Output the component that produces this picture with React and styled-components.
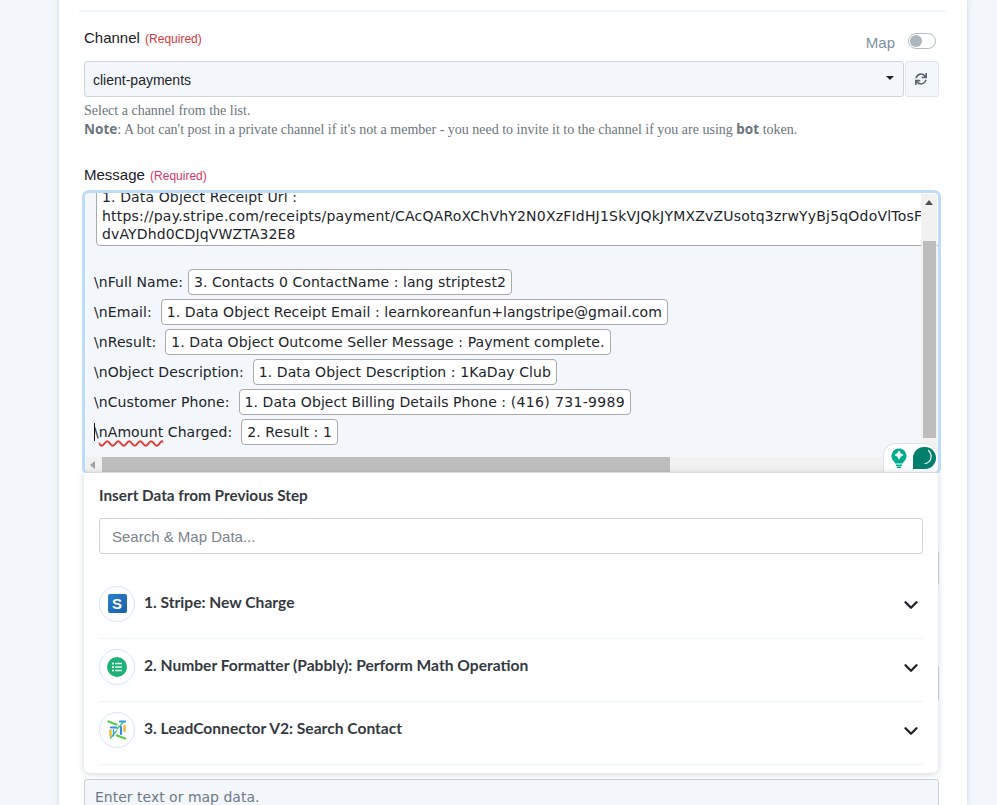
import React from 'react';
import styled, { createGlobalStyle } from 'styled-components';
import { FaSync } from 'react-icons/fa';
import { ChevronDown } from 'lucide-react';

const Global = createGlobalStyle`
  html, body { margin: 0; padding: 0; background: #f3f6fa; }
  body { font-family: "Liberation Sans", Arial, sans-serif; }
`;
const Page = styled.div`
  width: 997px; height: 805px; overflow: hidden; padding-left: 59px; box-sizing: border-box;
`;
const Card = styled.div`
  width: 908px; height: 805px; background: #fff; box-sizing: border-box;
  box-shadow: 0 0 4px rgba(150, 180, 225, .55);
  padding: 10px 28px 0 25px;
`;
const Divider = styled.div`
  height: 2px; background: #eff6fe; margin: 0 -7px 0 -5px;
`;
const LabelRow = styled.div`
  display: flex; align-items: flex-start; justify-content: space-between; height: 49px;
`;
const Label = styled.label`
  font-size: 15px; line-height: 18px; color: #1a2027; display: block;
`;
const ChannelLabel = styled(Label)`
  padding-top: 17px;
`;
const Required = styled.span`
  font-size: 12px; color: ${p => p.$pink ? '#e0335f' : '#d9363e'}; margin-left: 1px;
`;
const MapToggle = styled.div`
  display: flex; align-items: center; gap: 13px; margin: 22px 3px 0 0;
  font-size: 15px; color: #7d8fa3; line-height: 18px;
`;
const Switch = styled.span`
  width: 28px; height: 16px; border: 1px solid #b6bec8; border-radius: 9px; box-sizing: border-box;
  display: flex; align-items: center; padding-left: 1px; margin-top: -4px;
  &::before { content: ""; width: 12px; height: 12px; border-radius: 50%; background: #adb5bd; }
`;
const SelectRow = styled.div`
  display: flex; gap: 1px; height: 36px;
`;
const Select = styled.div`
  flex: 1; background: #f3f6fa; border: 1px solid #ced4da; border-radius: 3px; box-sizing: border-box;
  display: flex; align-items: center; justify-content: space-between; padding: 1px 9px 0 8px;
  font-size: 14px; color: #212529;
`;
const Caret = styled.span`
  width: 0; height: 0; border-left: 4px solid transparent; border-right: 4px solid transparent;
  border-top: 4px solid #212529; margin-bottom: 3px;
`;
const RefreshBtn = styled.div`
  width: 34px; background: #f3f6fa; border: 1px solid #e2e6eb; border-radius: 3px; box-sizing: border-box;
  display: flex; align-items: center; justify-content: center; color: #5a6570; font-size: 12px;
  padding-right: 2px;
`;
const Hint = styled.div`
  font-family: "Liberation Serif", serif; font-size: 14px; line-height: 19px; color: #6c757d;
  margin-top: 4px; height: 49px;
  b { font-family: "Noto Sans", sans-serif; font-weight: 700; font-size: 13.500px; }
`;
const MessageLabel = styled(Label)`
  height: 24px; margin-top: 16px;
`;
const EditorWrap = styled.div`
  position: relative; margin: 0 -2px; height: 285px; box-sizing: border-box;
  border: 3px solid #bedbf8; border-radius: 7px; background: #f3f6fa; overflow: visible;
`;
const EditorView = styled.div`
  height: 279px; overflow: hidden; position: relative; border-radius: 4px;
  font-family: "DejaVu Sans", Verdana, sans-serif; font-size: 14px; color: #212529; letter-spacing: .08px;
`;
const EditorContent = styled.div`
  padding-left: 9px; width: 900px; margin-top: -11px;
`;
const LongChip = styled.div`
  margin-left: 2px; width: 860px; height: 64px; padding: 5px 0 0 5px; box-sizing: border-box; white-space: nowrap;
  background: #fff; border: 1px solid #aaa; border-radius: 4px; line-height: 18.500px; margin-bottom: 21px;
  letter-spacing: .13px;
`;
const UrlLine = styled.span`
  letter-spacing: .2px;
`;
const Row = styled.div`
  display: flex; align-items: center; height: 30px; white-space: pre; position: relative;
`;
const Chip = styled.span`
  display: inline-flex; align-items: center; height: 26px; padding: 0 5px; box-sizing: border-box; white-space: pre;
  background: #fff; border: 1px solid #aaa; border-radius: 4px; margin-left: ${p => p.$ml}px;
`;
const Phone = styled.span`
  letter-spacing: .35px;
`;
const Wavy = styled.span`
  text-decoration: underline wavy #e53935 1.500px; text-underline-offset: 3px;
`;
const TextCaret = styled.span`
  position: absolute; left: 0; top: 6px; width: 1px; height: 18px; background: #111;
`;
const VTrack = styled.div`
  position: absolute; right: 1px; top: 1px; width: 16px; height: 264px; background: #f1f1f1;
`;
const VThumb = styled.div`
  position: absolute; left: 2px; top: 47px; width: 13px; height: 197px; background: #bdbdbd;
`;
const UpArrow = styled.div`
  position: absolute; left: 4px; top: 6px; width: 0; height: 0;
  border-left: 4px solid transparent; border-right: 4px solid transparent; border-bottom: 5px solid #505050;
`;
const HTrack = styled.div`
  position: absolute; left: 0; bottom: 0; height: 15px; width: 836px; background: #f1f1f1;
`;
const HThumb = styled.div`
  position: absolute; left: 17px; top: 0; width: 568px; height: 15px; background: #bdbdbd;
`;
const LeftArrow = styled.div`
  position: absolute; left: 5px; top: 4px; width: 0; height: 0;
  border-top: 4px solid transparent; border-bottom: 4px solid transparent; border-right: 5px solid #a0a0a0;
`;
const Badge = styled.div`
  position: absolute; right: 1px; bottom: 0; width: 54px; height: 29px; box-sizing: border-box;
  background: #fff; border: 1px solid #dde3ea; border-bottom: none; border-right: none; border-radius: 12px 13px 0 0;
  display: flex; align-items: center; gap: 6px; padding-left: 7px;
`;
const Panel = styled.div`
  position: absolute; left: -1px; right: 0; top: 279px; height: 301px; z-index: 3;
  background: #fff; border-top: 1px solid #d5dbe3; border-radius: 0 0 6px 6px; box-sizing: border-box;
  box-shadow: 0 1px 6px rgba(120, 130, 150, .35); padding: 14px 15px 0 15px;
`;
const PanelTitle = styled.div`
  font-family: Lato, sans-serif; font-weight: 700; font-size: 15.300px; line-height: 17px; color: #343a40;
`;
const SearchInput = styled.div`
  height: 36px; margin-top: 14px; border: 1px solid #ced4da; border-radius: 3px; box-sizing: border-box;
  display: flex; align-items: center; padding-left: 12px; font-size: 15px; color: #7b838b;
`;
const List = styled.div`
  margin-top: 22px;
`;
const Item = styled.div`
  height: 63px; box-sizing: border-box; display: flex; align-items: center; gap: 9px;
  border-bottom: 1px solid #eff5fc; padding: 0 0 7px 0;
`;
const IconCircle = styled.span`
  width: 36px; height: 36px; border-radius: 50%; border: 1px solid #d6e4fa; box-sizing: border-box;
  display: flex; align-items: center; justify-content: center; flex: none;
`;
const ItemTitle = styled.span`
  flex: 1; font-family: Lato, sans-serif; font-weight: 700; font-size: 15.600px; color: #343a40; margin-top: -3px;
`;
const Chevron = styled(ChevronDown)`
  color: #212529; margin: 3px 1px 0 0;
`;
const StripeLogo = styled.span`
  width: 19px; height: 19px; border-radius: 2px; background: linear-gradient(135deg, #2a7fd0, #1b5fa8);
  color: #fff; font-weight: 700; font-size: 15px; display: flex; align-items: center; justify-content: center;
`;
const GhostBox = styled.div`
  height: 36px; margin-top: ${p => p.$t}px; box-sizing: border-box;
  border: 1px solid #ced4da; border-radius: 3px; background: #f3f6fa;
`;
const BottomField = styled.div`
  height: 50px; margin-top: 78px; background: #f3f6fa; border: 1px solid #c9d0da; border-radius: 3px;
  box-sizing: border-box; padding: 9px 10px; font-family: "DejaVu Sans", Verdana, sans-serif; font-size: 14px; color: #6d7a88;
`;

const Bulb = () => (
  <svg width="16" height="20" viewBox="0 0 17 21">
    <path d="M8.500 0.500a8 8 0 0 1 5.200 14c-.8.700-1.200 1.200-1.200 1.900h-8c0-.7-.4-1.200-1.200-1.900a8 8 0 0 1 5.200-14z" fill="#00ab8e" />
    <path d="M8.500 3.500c.5 2.300 1.200 3 3.800 3.800-2.600.8-3.300 1.500-3.800 3.800-.5-2.300-1.200-3-3.800-3.800 2.600-.8 3.300-1.500 3.800-3.800z" fill="#fff" stroke="#fff" strokeWidth="1.400" strokeLinejoin="round" />
    <rect x="5" y="17.500" width="7" height="1.500" rx=".7" fill="#00ab8e" />
    <rect x="6" y="19.500" width="5" height="1.500" rx=".7" fill="#00ab8e" />
  </svg>
);
const Assistant = () => (
  <svg width="23" height="22" viewBox="0 0 23 22">
    <path d="M0 22V11A11 11 0 0 1 11 0h1a11 11 0 0 1 0 22z" fill="#037f6c" />
    <path d="M15.500 3.500c4.500 4.500 3 12-3.500 13" fill="none" stroke="#e6f4f1" strokeWidth="1.200" strokeLinecap="round" />
  </svg>
);
const ListLogo = () => (
  <svg width="20" height="20" viewBox="0 0 20 20">
    <circle cx="10" cy="10" r="10" fill="#1fb07a" />
    <g fill="#dff5ec">
      <rect x="5" y="5.500" width="2" height="2" rx=".5" /><rect x="8" y="5.800" width="7" height="1.500" rx=".5" />
      <rect x="5" y="9" width="2" height="2" rx=".5" /><rect x="8" y="9.300" width="7" height="1.500" rx=".5" />
      <rect x="5" y="12.500" width="2" height="2" rx=".5" /><rect x="8" y="12.800" width="7" height="1.500" rx=".5" />
    </g>
  </svg>
);
const LeadLogo = () => (
  <svg width="20" height="20" viewBox="0 0 20 20" fill="none" strokeLinecap="round">
    <path d="M1.500 1.500l8 3" stroke="#5ecb4a" strokeWidth="2.400" />
    <path d="M10 9L16.500 2" stroke="#3cbf6a" strokeWidth="1.300" />
    <path d="M13 1.500h5" stroke="#2f9be0" strokeWidth="2.200" />
    <path d="M4 7.500h5" stroke="#2f8fe6" strokeWidth="2.200" />
    <path d="M14 7v7" stroke="#2f8fe6" strokeWidth="2.200" />
    <path d="M3.500 18l6-7" stroke="#3cbf6a" strokeWidth="1.300" />
    <path d="M3.500 10.500v5" stroke="#f2b632" strokeWidth="2.400" />
    <path d="M17.500 6v5" stroke="#f2b632" strokeWidth="2.400" />
    <path d="M10 15.500l8 3" stroke="#5ecb4a" strokeWidth="2.400" />
    <path d="M6.500 10v6" stroke="#2f9be0" strokeWidth="1.400" />
  </svg>
);

const rows = [
  ['\\nFull Name:', '3. Contacts 0 ContactName : lang striptest2', 5],
  ['\\nEmail:', '1. Data Object Receipt Email : learnkoreanfun+langstripe@gmail.com', 9],
  ['\\nResult:', '1. Data Object Outcome Seller Message : Payment complete.', 9],
  ['\\nObject Description:', '1. Data Object Description : 1KaDay Club', 9],
];
const items = [
  [<StripeLogo key="s">S</StripeLogo>, '1. Stripe: New Charge'],
  [<ListLogo key="l" />, '2. Number Formatter (Pabbly): Perform Math Operation'],
  [<LeadLogo key="c" />, '3. LeadConnector V2: Search Contact'],
];

export default function App() {
  return (
    <Page>
      <Global />
      <Card>
        <Divider />
        <LabelRow>
          <ChannelLabel>Channel <Required>(Required)</Required></ChannelLabel>
          <MapToggle>Map<Switch /></MapToggle>
        </LabelRow>
        <SelectRow>
          <Select>client-payments<Caret /></Select>
          <RefreshBtn><FaSync /></RefreshBtn>
        </SelectRow>
        <Hint>
          Select a channel from the list.<br />
          <b>Note</b>: A bot can't post in a private channel if it's not a member - you need to invite it to the channel if you are using <b>bot</b> token.
        </Hint>
        <MessageLabel>Message <Required $pink>(Required)</Required></MessageLabel>
        <EditorWrap>
          <EditorView>
            <EditorContent>
              <LongChip>
                1. Data Object Receipt Url :<br />
                <UrlLine>https://pay.stripe.com/receipts/payment/CAcQARoXChVhY2N0XzFIdHJ1SkVJQkJYMXZvZUsotq3zrwYyBj5qOdoVlTosF</UrlLine><br />
                dvAYDhd0CDJqVWZTA32E8
              </LongChip>
              {rows.map(([l, c, ml]) => (
                <Row key={l}>{l}<Chip $ml={ml}>{c}</Chip></Row>
              ))}
              <Row>{'\\nCustomer Phone:'}<Chip $ml={9}>1. Data Object Billing Details Phone : <Phone>(416) 731-9989</Phone></Chip></Row>
              <Row><TextCaret />\<Wavy>nAmount</Wavy> Charged:<Chip $ml={9}>2. Result : 1</Chip></Row>
            </EditorContent>
            <VTrack><UpArrow /><VThumb /></VTrack>
            <HTrack><LeftArrow /><HThumb /></HTrack>
            <Badge><Bulb /><Assistant /></Badge>
          </EditorView>
          <Panel>
            <PanelTitle>Insert Data from Previous Step</PanelTitle>
            <SearchInput>Search &amp; Map Data...</SearchInput>
            <List>
              {items.map(([icon, t]) => (
                <Item key={t}>
                  <IconCircle>{icon}</IconCircle>
                  <ItemTitle>{t}</ItemTitle>
                  <Chevron size={22} strokeWidth={2.600} />
                </Item>
              ))}
            </List>
          </Panel>
        </EditorWrap>
        <GhostBox $t={75} />
        <GhostBox $t={79} />
        <BottomField>Enter text or map data.</BottomField>
      </Card>
    </Page>
  );
}
